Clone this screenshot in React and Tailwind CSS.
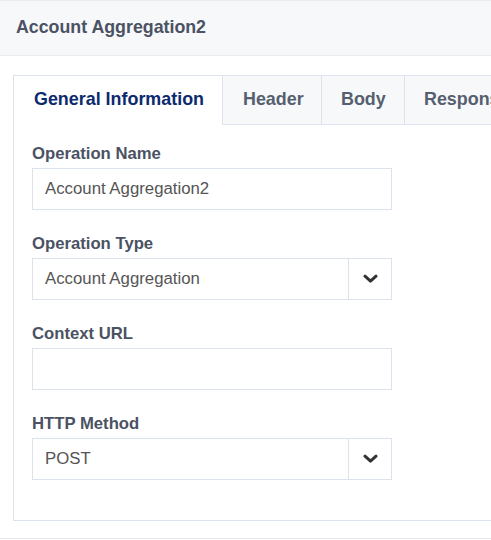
import React from "react";

function Chevron() {
  return (
    <svg width="15" height="10" viewBox="0 0 15 10" className="block">
      <path d="M2 2.2 L7.5 7.2 L13 2.2" fill="none" stroke="#333" strokeWidth="3" strokeLinecap="round" strokeLinejoin="round" />
    </svg>
  );
}

function Field({ label, children }) {
  return (
    <div className="flex flex-col">
      <div className="text-[16.7px] leading-[20px] font-bold text-[#4a5263] mb-[4px]">{label}</div>
      {children}
    </div>
  );
}

function TextInput({ value }) {
  return (
    <div className="w-[360px] h-[42px] border border-[#dde3ee] bg-white flex items-center pl-[12px] text-[16.8px] text-[#555]">
      {value}
    </div>
  );
}

function Select({ value }) {
  return (
    <div className="w-[360px] h-[42px] border border-[#dde3ee] bg-white flex items-stretch text-[16.8px] text-[#555]">
      <div className="flex-1 flex items-center pl-[12px]">{value}</div>
      <div className="w-[43px] border-l border-[#dde3ee] flex items-center justify-center">
        <Chevron />
      </div>
    </div>
  );
}

export default function App() {
  return (
    <div
      className="w-[491px] h-[540px] bg-white overflow-hidden flex flex-col"
      style={{ fontFamily: '"Liberation Sans", Arial, sans-serif' }}
    >
      <div className="h-[56px] shrink-0 border-t border-b border-[#e8ebf0] bg-[#f7f8fa] flex items-center pl-[16px] pb-[1px] text-[17.8px] font-bold text-[#4a5263]">
        Account Aggregation2
      </div>
      <div className="ml-[13px] mt-[19px] w-[520px] h-[446px] shrink-0 border border-[#dde3ee] flex flex-col">
        <div className="h-[49px] flex text-[17.9px] font-bold">
          <div className="w-[209px] border-r border-[#dde3ee] bg-white flex items-center pl-[20px] pb-[2px] text-[#0c2a6e]">
            General Information
          </div>
          <div className="w-[99px] border-r border-b border-[#dde3ee] bg-[#f7f8fa] flex items-center pl-[20px] pb-[1px] text-[#555f6f]">
            Header
          </div>
          <div className="w-[83px] border-r border-b border-[#dde3ee] bg-[#f7f8fa] flex items-center pl-[19px] pb-[1px] text-[#555f6f]">
            Body
          </div>
          <div className="flex-1 border-b border-[#dde3ee] bg-[#f7f8fa] flex items-center pl-[19px] pb-[1px] text-[#555f6f]">
            Response
          </div>
        </div>
        <div className="pl-[18px] pt-[19px] flex flex-col gap-[24px]">
          <Field label="Operation Name">
            <TextInput value="Account Aggregation2" />
          </Field>
          <Field label="Operation Type">
            <Select value="Account Aggregation" />
          </Field>
          <Field label="Context URL">
            <TextInput value="" />
          </Field>
          <Field label="HTTP Method">
            <Select value="POST" />
          </Field>
        </div>
      </div>
      <div className="mt-[17px] border-t border-[#e4e8ef]" />
    </div>
  );
}
